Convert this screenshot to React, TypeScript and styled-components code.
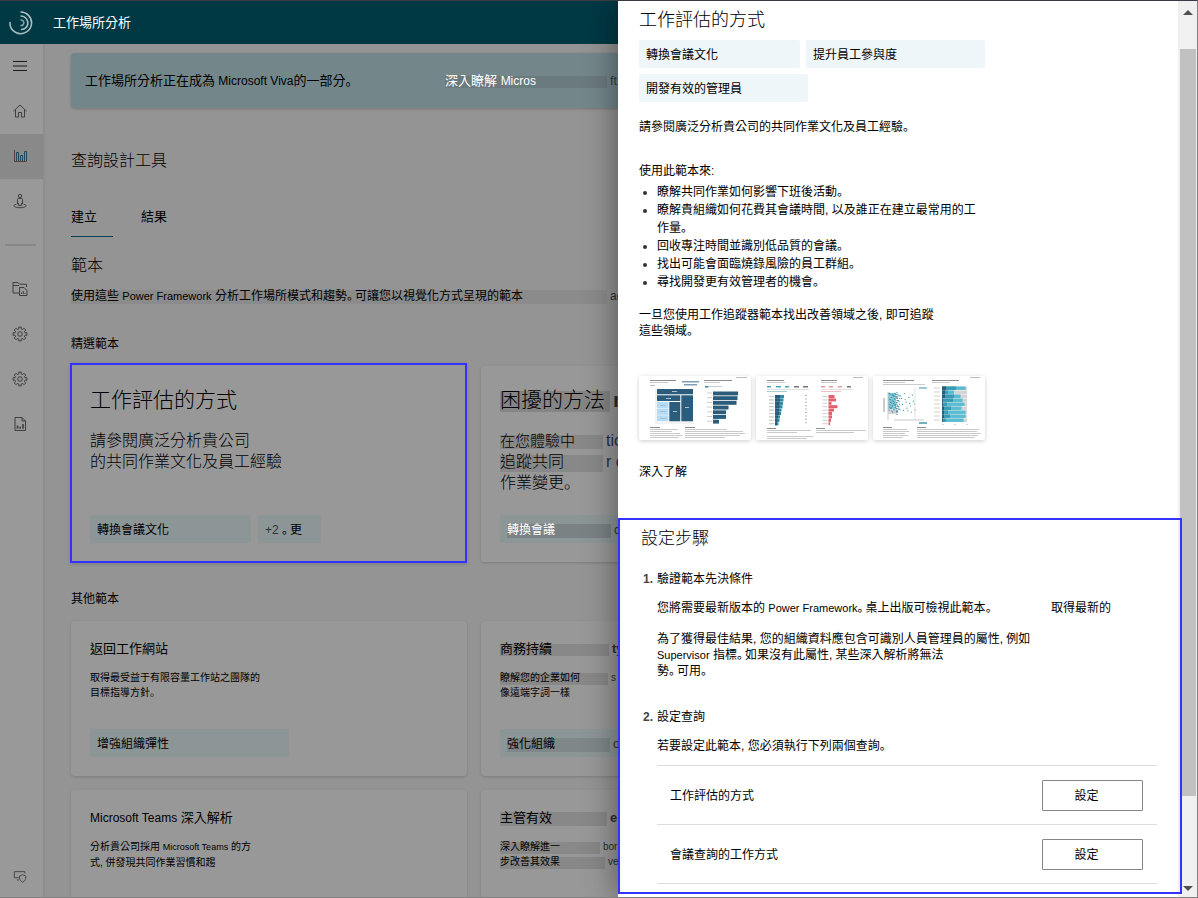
import React from "react";
import styled, { createGlobalStyle } from "styled-components";

const GlobalStyle = createGlobalStyle`
  *, *::before, *::after { box-sizing: border-box; }
  body {
    margin: 0;
    color: #000;
    font: 12px/16px "Liberation Sans", "Noto Sans CJK TC", sans-serif;
  }
  h1, h2, h3, p, ul, ol { margin: 0; padding: 0; font-size: inherit; font-weight: 400; }
  ul, ol { list-style: none; }
  a { color: inherit; text-decoration: none; }
  button { font: inherit; color: inherit; cursor: pointer; }
`;

const BLUE = "#3333ff";

/* ---------- frame ---------- */

const Window = styled.div`
  position: relative;
  display: flex;
  flex-direction: column;
  height: 100vh;
  overflow: hidden;
  background: #949494;
  border: solid #808080;
  border-width: 1px 1px 1px 0;
  border-top-color: #3a3a42;
`;

const TopBar = styled.header`
  display: flex;
  flex: none;
  align-items: center;
  gap: 20px;
  height: 43px;
  padding-left: 9px;
  background: #003944;
  color: #fff;
`;

const AppName = styled.h1`
  font-size: 13px;
  line-height: 20px;
`;

const Body = styled.div`
  display: flex;
  flex: 1;
  min-height: 0;
`;

const SideNav = styled.nav`
  display: flex;
  flex: none;
  flex-direction: column;
  width: 43px;
  background: #999;
  box-shadow: 1px 0 3px rgba(0, 0, 0, 0.08);
`;

const NavButton = styled.button<{ $active?: boolean; $last?: boolean }>`
  display: flex;
  align-items: center;
  justify-content: center;
  height: ${(p) => (p.$last ? 40 : 45)}px;
  margin: ${(p) => (p.$last ? "auto 0 0" : "0")};
  padding: 0 3px 2px 0;
  border: 0;
  background: ${(p) => (p.$active ? "#898989" : "transparent")};
  color: #3f3f3f;
`;

const NavRule = styled.hr`
  width: 31px;
  height: 2px;
  margin: 20px auto 21px 5px;
  border: 0;
  background: #878787;
`;

const Main = styled.main`
  flex: 1;
  min-width: 0;
  padding: 9px 28px 0;
  overflow: hidden;
`;

/* ---------- page content ---------- */

const Latin = styled.span<{ $size?: number; $color?: string }>`
  font-size: ${(p) => p.$size ?? 11}px;
  color: ${(p) => p.$color ?? "inherit"};
`;

/* Full stop set low and to the left, on half an em. */
const StopMark = styled.span`
  margin-right: 2px;
  font-family: "Noto Sans CJK JP", sans-serif;
  font-feature-settings: "halt";
  line-height: 0;
`;
const Stop = () => <StopMark lang="ja">。</StopMark>;

const Banner = styled.section`
  display: flex;
  align-items: center;
  height: 55px;
  padding: 1px 14px 0;
  border-radius: 4px;
  background: #73878b;
  box-shadow: 0 1px 3px rgba(0, 0, 0, 0.2);
  font-size: 13px;
  line-height: 20px;
  white-space: nowrap;
`;

const BannerText = styled.p`
  width: 360px;
`;

const Patch = styled.span<{ $width: number; $tone?: string; $height?: number; $drop?: number }>`
  display: inline-block;
  width: ${(p) => p.$width}px;
  background: linear-gradient(${(p) => p.$tone ?? "#888"} 0 0) no-repeat
    0 calc(50% + ${(p) => p.$drop ?? 1}px) / 100% ${(p) => p.$height ?? 14}px;
  white-space: nowrap;
`;

const Rest = styled.span<{ $bold?: boolean; $color?: string }>`
  margin-left: 3px;
  color: ${(p) => p.$color ?? "#2e2e2e"};
  font-weight: ${(p) => (p.$bold ? 700 : 400)};
`;

const BannerLink = styled.a`
  color: #fff;
`;

const PageTitle = styled.h2`
  margin-top: 43px;
  font-size: 16px;
  font-weight: 300;
  line-height: 20px;
`;

const Tabs = styled.div`
  display: flex;
  gap: 28px;
  margin-top: 36px;
`;

const Tab = styled.button<{ $active?: boolean }>`
  width: 42px;
  padding: 0 0 9px;
  border: 0;
  border-bottom: 1px solid ${(p) => (p.$active ? "#003f4c" : "transparent")};
  background: none;
  font-size: 13px;
  line-height: 20px;
  text-align: left;
`;

const SectionTitle = styled.h2`
  margin-top: 19px;
  font-size: 16px;
  font-weight: 300;
  line-height: 20px;
`;

const Lead = styled.p`
  margin-top: 12px;
  white-space: nowrap;
`;

const GroupTitle = styled.h3<{ $top: number }>`
  margin: ${(p) => p.$top}px 0 14px;
`;

const Grid = styled.div`
  display: grid;
  grid-template-columns: repeat(2, minmax(0, 396px));
  gap: 14px;
`;

const Card = styled.article<{ $large?: boolean }>`
  display: flex;
  flex-direction: column;
  min-height: ${(p) => (p.$large ? 196 : 155)}px;
  padding: ${(p) => (p.$large ? 22 : 18)}px 19px 19px;
  border-radius: 4px;
  background: #989898;
  box-shadow: 0 1px 3px rgba(0, 0, 0, 0.16);
  white-space: nowrap;
`;

const SelectedCard = styled(Card)`
  margin: -3px 0 -1px -1px;
  padding: 23px 18px 18px;
  border: 2px solid ${BLUE};
  border-radius: 0;
`;

const CardTitle = styled.h3<{ $large?: boolean }>`
  font-size: ${(p) => (p.$large ? 21 : 13)}px;
  line-height: ${(p) => (p.$large ? 24 : 20)}px;
  font-weight: ${(p) => (p.$large ? 300 : 400)};
`;

const CardText = styled.p<{ $large?: boolean }>`
  margin-top: ${(p) => (p.$large ? 18 : 11)}px;
  font-size: ${(p) => (p.$large ? 16 : 10)}px;
  font-weight: ${(p) => (p.$large ? 300 : 400)};
  line-height: ${(p) => (p.$large ? 21 : 15)}px;
`;

const TagRow = styled.div<{ $bottom?: boolean }>`
  display: flex;
  flex-wrap: wrap;
  gap: ${(p) => (p.$bottom ? 7 : 6)}px;
  margin-top: ${(p) => (p.$bottom ? "auto" : "8px")};
`;

const Tag = styled.span<{ $width: number; $light?: boolean }>`
  width: ${(p) => p.$width}px;
  padding: 7px 7px 5px;
  border-radius: 2px;
  background: ${(p) => (p.$light ? "#eef6f9" : "#8d9697")};
  white-space: nowrap;
`;

/* ---------- side panel ---------- */

const Panel = styled.aside`
  position: absolute;
  top: 0;
  right: 0;
  bottom: 0;
  display: flex;
  width: 579px;
  max-width: 100%;
  background: #fff;
  box-shadow: -2px 0 30px rgba(0, 0, 0, 0.42);
`;

const PanelContent = styled.div`
  flex: 1;
  min-width: 0;
  padding-top: 7px;
`;

const PanelTop = styled.div`
  padding-left: 21px;
`;

const PanelTitle = styled.h2`
  font-size: 18px;
  line-height: 24px;
  font-weight: 300;
`;

const PanelTags = styled(TagRow)`
  max-width: 352px;
`;

const Para = styled.p<{ $top: number }>`
  margin-top: ${(p) => p.$top}px;
`;

const Bullets = styled.ul`
  margin-top: 4px;
  padding-left: 18px;
  line-height: 18px;
  list-style: disc;

  li::marker { color: #333; }
`;

const Thumbs = styled.div`
  display: flex;
  gap: 5px;
  margin-top: 37px;
`;

const Thumb = styled.figure`
  width: 112px;
  height: 64px;
  margin: 0;
  border-radius: 2px;
  background: #fff;
  box-shadow: 0 1px 4px rgba(0, 0, 0, 0.2);

  svg { display: block; }
`;

const MoreLink = styled.a`
  display: block;
  width: max-content;
  margin-top: 24px;
`;

const Setup = styled.section`
  position: relative;
  z-index: 1;
  margin: 38px -4px 0 0;
  padding: 7px 23px 8px 21px;
  border: 2px solid ${BLUE};
`;

const SetupTitle = styled.h2`
  margin-bottom: 20px;
  font-size: 17px;
  font-weight: 300;
  line-height: 24px;
`;

const Step = styled.li`
  display: grid;
  grid-template-columns: 14px minmax(0, 1fr);
  padding-left: 2px;

  & + & { margin-top: 30px; }
`;

const StepNumber = styled.span`
  color: #444;
  font-weight: 700;
`;

const LinkLine = styled.div`
  display: flex;
  justify-content: space-between;
  margin-top: 13px;
  padding-right: 46px;
`;

const Queries = styled.ul`
  margin-top: 11px;
  border-top: 1px solid #dcdcdc;
`;

const Query = styled.li`
  display: flex;
  align-items: center;
  justify-content: space-between;
  height: 59px;
  padding: 0 14px 0 13px;
  border-bottom: 1px solid #dcdcdc;
`;

const QueryName = styled.span`
  padding-top: 2px;
`;

const SetButton = styled.button`
  width: 101px;
  height: 31px;
  padding: 2px 12px 0 0;
  border: 1px solid #868686;
  border-radius: 1px;
  background: #fff;
`;

const ScrollRail = styled.div`
  display: flex;
  flex: none;
  flex-direction: column;
  align-items: center;
  width: 19px;
  background: #f0f0f0;
`;

const ScrollArrow = styled.button<{ $down?: boolean }>`
  display: flex;
  align-items: center;
  justify-content: center;
  width: 100%;
  height: ${(p) => (p.$down ? 18 : 22)}px;
  padding: 0;
  border: 0;
  background: none;
`;

const ScrollTrack = styled.div`
  flex: 1;
  width: 16px;
  padding-top: 26px;
`;

const ScrollThumb = styled.div`
  height: 90%;
  background: #c1c1c1;
`;

/* ---------- drawings ---------- */

const Logo = () => (
  <svg width="24" height="24" viewBox="0 0 24 24" fill="none" stroke="#a9bcc0" strokeWidth="1.6" strokeLinecap="round">
    <path d="M1 11.5a10.6 10.6 0 0 0 5.4 9.8A11 11 0 0 0 22.6 12 11 11 0 0 0 12 1" />
    <path d="M12 5a7 7 0 0 1 6.8 8 7 7 0 0 1-6.300 5.500" />
    <path d="M12 9a2.800 2.800 0 0 1 0 5.600" stroke="#7d9da4" />
  </svg>
);

const Glyph = ({ children, size = 16 }: { children: React.ReactNode; size?: number }) => (
  <svg width={size} height={size} viewBox="0 0 16 16" fill="none" stroke="currentColor" strokeWidth="1">
    {children}
  </svg>
);

const MenuIcon = () => (
  <Glyph><path d="M1 3.5h14M1 8h14M1 12.5h14" strokeWidth="1.2" stroke="#1c1c1c" /></Glyph>
);
const HomeIcon = () => (
  <Glyph><path d="M1.5 8.2 8 2l6.5 6.2M3.5 7v7h3V9.5h3V14h3V7" /></Glyph>
);
const ChartIcon = () => (
  <Glyph>
    <path d="M2.5 2v11.5h12" stroke="#5c3f38" />
    <path d="M4.500 13V4.500h2V13M8.500 13V7.500h2V13M12.500 13V3.500h2V13" stroke="#23485c" />
  </Glyph>
);
const PersonIcon = () => (
  <Glyph>
    <circle cx="8" cy="3" r="1.7" />
    <path d="M5.5 11V6.5q0-1 1-1h3q1 0 1 1V11M6.5 10v2.5h3V10" />
    <path d="M4.5 11.2c-2 .4-2.500 1-2.500 1.500 0 1.300 3 2 6 2s6-.7 6-2c0-.500-.500-1.100-2.500-1.500" />
  </Glyph>
);
const FolderIcon = () => (
  <Glyph>
    <path d="M7 12H1V1.500h5l1.500 1.700H14.500V6M1 4.500h6" />
    <path d="M7.500 6.500h4.500l3 3V14.500H7.500zM9.500 13v-1.500M11.300 13v-3M13 13v-1" />
  </Glyph>
);
const ReportIcon = () => (
  <Glyph>
    <path d="M3 1.500h7l3.500 3.500v9.500H3zM10 1.500V5h3.500" />
    <path d="M5.500 12.800V9.500M8.200 12.800v-2M11 12.800V8" strokeWidth="1.600" />
  </Glyph>
);
const ShieldIcon = () => (
  <Glyph size={14}>
    <path d="M6.500 10H1.500V3h12v2M4.500 12.500h2.500" />
    <path d="M11 6.500 7.500 8v2.500c0 2 1.500 3.500 3.500 4.500 2-1 3.500-2.500 3.500-4.500V8z" />
  </Glyph>
);

/* Toothed wheel: eight flat teeth round a ring. */
const TEETH = Array.from({ length: 8 }, (_, i) => {
  const at = (deg: number, r: number) => {
    const a = ((i * 45 + deg) * Math.PI) / 180;
    return `${(8 + r * Math.cos(a)).toFixed(2)} ${(8 + r * Math.sin(a)).toFixed(2)}`;
  };
  return `${at(-13, 5.2)}L${at(-11, 7)}L${at(11, 7)}L${at(13, 5.2)}`;
}).join("L");

const GearIcon = () => (
  <Glyph>
    <path d={`M${TEETH}Z`} strokeLinejoin="round" />
    <circle cx="8" cy="8" r="2.300" />
  </Glyph>
);

const Lines = ({ x, y, widths, step = 2 }: { x: number; y: number; widths: number[]; step?: number }) => (
  <g fill="#c9c9c9">
    {widths.map((w, i) => (
      <rect key={i} x={x} y={y + i * step} width={w} height="1" fill={i === 0 ? "#8c8c8c" : undefined} />
    ))}
  </g>
);

const Bars = ({ x, y, pitch, h, widths, fill }: { x: number; y: number; pitch: number; h: number; widths: number[]; fill: string }) => (
  <g fill={fill}>
    {widths.map((w, i) => (
      <React.Fragment key={i}>
        <rect x={x} y={y + i * pitch} width={w} height={h} />
        <rect x={x - 6} y={y + i * pitch + 1} width="5" height="1" fill="#cfcfcf" />
      </React.Fragment>
    ))}
  </g>
);

const TreemapChart = () => (
  <svg width="112" height="64" viewBox="0 0 112 64" role="img" aria-label="圖表">
    <Lines x={11} y={4} widths={[26, 18]} />
    <rect x="43" y="5" width="17" height="1.500" fill="#7d9db8" />
    <rect x="45" y="8" width="13" height="1.500" fill="#7d9db8" />
    <rect x="11" y="9" width="5" height="1" fill="#bbb" />
    <g fill="#2b5c7b">
      <rect x="18" y="13" width="36" height="5.300" />
      <rect x="18" y="19.300" width="23.300" height="5.700" />
      <rect x="42.300" y="19.300" width="11.700" height="26" />
      <rect x="30.300" y="26" width="11" height="19.300" />
    </g>
    <g fill="#b5dbf8">
      <rect x="18" y="26" width="11.500" height="6" />
      <rect x="18" y="32.500" width="11.500" height="6.300" />
      <rect x="18" y="39.300" width="11.500" height="6" />
    </g>
    <g fill="#a9c0ce">
      <rect x="33" y="15" width="5" height="1" />
      <rect x="27" y="22" width="5" height="1" />
      <rect x="46" y="31" width="4" height="1" />
      <rect x="34" y="35" width="4" height="1" />
      <rect x="21" y="29" width="6" height="1" />
      <rect x="21" y="35" width="6" height="1" />
      <rect x="21" y="42" width="6" height="1" />
    </g>
    <path d="M17 13v34h38" stroke="#d5d5d5" strokeWidth=".6" fill="none" />
    <Lines x={65} y={4} widths={[28, 16]} />
    <rect x="66" y="10" width="3.500" height="1.500" fill="#2b8ba8" />
    <rect x="70" y="10" width="13" height="1" fill="#ccc" />
    <rect x="97" y="1" width="11" height="1" fill="#bbb" />
    <Bars x={74} y={15.500} pitch={4.700} h={3.900} widths={[25, 24.500, 23.500, 15.500, 13, 13, 6]} fill="#2b5c7b" />
    <Lines x={11} y={51} widths={[10, 28, 22, 30, 32, 29]} />
    <Lines x={46} y={51} widths={[10, 42, 58, 60, 55, 40]} />
  </svg>
);

const CompareChart = () => (
  <svg width="112" height="64" viewBox="0 0 112 64" role="img" aria-label="圖表">
    <Lines x={11} y={4} widths={[17, 18]} />
    <Lines x={65} y={4} widths={[16, 16]} />
    <rect x="97" y="1" width="10" height="1" fill="#bbb" />
    <g fill="#4ba6ba">
      <rect x="11" y="10" width="4" height="1.500" />
      <rect x="20" y="10" width="5" height="1.500" />
      <rect x="29" y="10" width="4" height="1.500" />
    </g>
    <g fill="#777">
      <rect x="38" y="10" width="5" height="1.500" />
      <rect x="47" y="10" width="5" height="1.500" />
      <rect x="91" y="10" width="4" height="1.500" />
    </g>
    <g fill="#e79aa2">
      <rect x="65" y="10" width="4" height="1.500" />
      <rect x="73" y="10" width="4" height="1.500" />
      <rect x="82" y="10" width="4" height="1.500" />
    </g>
    <rect x="11" y="13" width="42" height=".6" fill="#ccc" />
    <rect x="65" y="13" width="32" height=".6" fill="#ccc" />
    <rect x="11" y="15" width="20" height="1" fill="#a9cdd6" />
    <rect x="65" y="15" width="20" height="1" fill="#ecc0c4" />
    <Bars x={19} y={19} pitch={3.400} h={3.100} widths={[9, 8.500, 8, 7.500, 6.500, 6, 5, 4.500, 3.500]} fill="#2f8da6" />
    <Bars x={19} y={19} pitch={3.400} h={3.100} widths={[5, 5, 4.500, 4.500, 4, 4, 3, 2.500, 2]} fill="#2b5c7b" />
    <path d="M50 19v30" stroke="#b5b5b5" strokeDasharray="1 2.400" strokeWidth="2" />
    <Bars x={72.500} y={19} pitch={3.400} h={3} widths={[6, 7.500, 3, 9, 5.500, 3.500, 3.500, 2.500, 1.500]} fill="#e0606c" />
    <Lines x={11} y={52} widths={[9, 44, 30, 0, 46, 40]} />
    <Lines x={60} y={52} widths={[9, 50, 38]} />
  </svg>
);

const dots = Array.from({ length: 90 }, (_, i) => ({
  x: 16 + ((i * 37) % 90) * (i % 3 === 0 ? 0.3 : 0.12),
  y: 17 + ((i * 53) % 97) * 0.2,
}));
const stacks = [25, 25, 20, 22, 24, 21, 25, 25, 23];

const ScatterChart = () => (
  <svg width="112" height="64" viewBox="0 0 112 64" role="img" aria-label="圖表">
    <Lines x={10} y={4} widths={[31, 22]} />
    <rect x="10" y="8" width="42" height="1" fill="#ccc" />
    <rect x="15" y="33" width="9" height="5" fill="#d8d8d8" />
    <rect x="15" y="17" width="8" height="16" fill="#8ccbd8" />
    <g fill="#3a93aa">
      {dots.map((d, i) => <circle key={i} cx={d.x} cy={d.y} r=".6" />)}
    </g>
    <path d="M24 16v24" stroke="#2b5c7b" strokeWidth=".8" strokeDasharray="1 1" />
    <path d="M42 12v32" stroke="#d0d0d0" strokeWidth=".6" />
    <rect x="46" y="11" width="8" height="2" fill="#9ccbd6" />
    <path d="M15 16v28M21 44h30" stroke="#bbb" strokeWidth=".8" />
    <rect x="10.500" y="22" width="1" height="14" fill="#999" />
    <rect x="46" y="46" width="8" height="2" fill="#6fb3c3" />
    <Lines x={59} y={4} widths={[27, 18]} />
    <rect x="97" y="1" width="10" height="1" fill="#bbb" />
    {stacks.map((w, i) => (
      <g key={i}>
        <rect x="61" y={11.500 + i * 4} width="6" height="1" fill="#cfcfcf" />
        <rect x="69" y={10.500 + i * 4} width="25" height="3.400" fill="#d3d3d3" />
        <rect x="69" y={10.500 + i * 4} width={i === 1 ? 12 : w - 1.500} height="3.400" fill="#58bdd2" />
        <rect x="69" y={10.500 + i * 4} width={[14, 6, 12, 11, 5, 9, 6, 8, 4][i]} height="3.400" fill="#3a9ab2" />
        <rect x="69" y={10.500 + i * 4} width={[4, 3, 3, 1, 1, 2, 2, 2, 1][i]} height="3.400" fill="#2b5c7b" />
      </g>
    ))}
    <path d="M69 48.500h26" stroke="#ccc" strokeWidth=".8" strokeDasharray="2 10" />
    <Lines x={10} y={51} widths={[9, 24, 26, 22, 25, 20]} />
    <Lines x={44} y={51} widths={[9, 62, 60, 64, 61, 58]} />
  </svg>
);

/* ---------- app ---------- */

export default function App() {
  return (
    <Window>
      <GlobalStyle />
      <TopBar>
        <Logo />
        <AppName>工作場所分析</AppName>
      </TopBar>
      <Body>
        <SideNav aria-label="導覽">
          <NavButton aria-label="功能表"><MenuIcon /></NavButton>
          <NavButton aria-label="首頁"><HomeIcon /></NavButton>
          <NavButton aria-label="分析" $active><ChartIcon /></NavButton>
          <NavButton aria-label="人員"><PersonIcon /></NavButton>
          <NavRule />
          <NavButton aria-label="資料夾"><FolderIcon /></NavButton>
          <NavButton aria-label="設定"><GearIcon /></NavButton>
          <NavButton aria-label="系統設定"><GearIcon /></NavButton>
          <NavButton aria-label="報告"><ReportIcon /></NavButton>
          <NavButton aria-label="隱私權" $last><ShieldIcon /></NavButton>
        </SideNav>
        <Main>
          <Banner>
            <BannerText>
              工作場所分析正在成為<Latin $size={12}> Microsoft Viva</Latin>的一部分<Stop />
            </BannerText>
            <BannerLink href="#viva">
              <Patch $width={162} $tone="#6b7a7e" $height={12}>深入瞭解 <Latin $size={12}>Micros</Latin></Patch>
              <Rest $color="#2f4347">ft</Rest>
            </BannerLink>
          </Banner>
          <PageTitle>查詢設計工具</PageTitle>
          <Tabs role="tablist">
            <Tab role="tab" aria-selected="true" $active>建立</Tab>
            <Tab role="tab" aria-selected="false">結果</Tab>
          </Tabs>
          <SectionTitle>範本</SectionTitle>
          <Lead>
            <Patch $width={536} $tone="#8b8b8b">
              使用這些 <Latin>Power Framework</Latin> 分析工作場所模式和趨勢<Stop />可讓您以視覺化方式呈現的範本
            </Patch>
            <Rest>ad</Rest>
          </Lead>
          <GroupTitle $top={32}>精選範本</GroupTitle>
          <Grid>
            <SelectedCard $large>
              <CardTitle $large>工作評估的方式</CardTitle>
              <CardText $large>請參閱廣泛分析貴公司<br />的共同作業文化及員工經驗</CardText>
              <TagRow $bottom>
                <Tag $width={161}>轉換會議文化</Tag>
                <Tag $width={63}><Latin $size={12} $color="#333">+2</Latin> <Stop />更</Tag>
              </TagRow>
            </SelectedCard>
            <Card $large>
              <CardTitle $large><Patch $width={110} $height={23} $drop={2} $tone="#858585">困擾的方法</Patch><Rest $bold>m</Rest></CardTitle>
              <CardText $large>
                <Patch $width={103}><Latin $size={15}>在您體驗中</Latin></Patch><Rest $color="#26324a">tion</Rest><br />
                <Patch $width={103} $height={18} $drop={2}>追蹤共同</Patch><Rest $color="#26324a">r c</Rest><br />
                作業變更<Stop />
              </CardText>
              <TagRow $bottom>
                <Tag $width={170}><Patch $width={104} $tone="#7a8283"><Latin $size={12} $color="#fff">轉換會議</Latin></Patch><Rest>c</Rest></Tag>
              </TagRow>
            </Card>
          </Grid>
          <GroupTitle $top={29}>其他範本</GroupTitle>
          <Grid>
            <Card>
              <CardTitle>返回工作網站</CardTitle>
              <CardText>取得最受益于有限容量工作站之團隊的<br />目標指導方針<Stop /></CardText>
              <TagRow $bottom><Tag $width={199}>增強組織彈性</Tag></TagRow>
            </Card>
            <Card>
              <CardTitle><Patch $width={109} $height={12}>商務持續</Patch><Rest $bold>ty</Rest></CardTitle>
              <CardText>
                <Patch $width={108} $height={12}>瞭解您的企業如何</Patch><Rest>s</Rest><br />
                像遠端字詞一樣
              </CardText>
              <TagRow $bottom><Tag $width={170}><Patch $width={103} $tone="#7f8788">強化組織</Patch><Rest>o</Rest></Tag></TagRow>
            </Card>
            <Card>
              <CardTitle><Latin $size={12}>Microsoft Teams</Latin> 深入解析</CardTitle>
              <CardText>分析貴公司採用 <Latin $size={9}>Microsoft Teams</Latin> 的方<br />式, 併發現共同作業習慣和趨</CardText>
            </Card>
            <Card>
              <CardTitle><Patch $width={107}>主管有效</Patch><Rest $bold>e</Rest></CardTitle>
              <CardText>
                <Patch $width={100} $height={12}>深入瞭解進一</Patch><Rest>bor</Rest><br />
                <Patch $width={105} $height={12}>步改善其效果</Patch><Rest>ve</Rest>
              </CardText>
            </Card>
          </Grid>
        </Main>
      </Body>

      <Panel aria-label="範本詳細資料">
        <PanelContent>
          <PanelTop>
            <PanelTitle>工作評估的方式</PanelTitle>
            <PanelTags>
              <Tag $light $width={161}>轉換會議文化</Tag>
              <Tag $light $width={179}>提升員工參與度</Tag>
              <Tag $light $width={169}>開發有效的管理員</Tag>
            </PanelTags>
            <Para $top={17}>請參閱廣泛分析貴公司的共同作業文化及員工經驗<Stop /></Para>
            <Para $top={28}>使用此範本來:</Para>
            <Bullets>
              <li>瞭解共同作業如何影響下班後活動<Stop /></li>
              <li>瞭解貴組織如何花費其會議時間, 以及誰正在建立最常用的工<br />作量<Stop /></li>
              <li>回收專注時間並識別低品質的會議<Stop /></li>
              <li>找出可能會面臨燒錄風險的員工群組<Stop /></li>
              <li>尋找開發更有效管理者的機會<Stop /></li>
            </Bullets>
            <Para $top={16}>一旦您使用工作追蹤器範本找出改善領域之後, 即可追蹤<br />這些領域<Stop /></Para>
            <Thumbs>
              <Thumb><TreemapChart /></Thumb>
              <Thumb><CompareChart /></Thumb>
              <Thumb><ScatterChart /></Thumb>
            </Thumbs>
            <MoreLink href="#more">深入了解</MoreLink>
          </PanelTop>
          <Setup>
            <SetupTitle>設定步驟</SetupTitle>
            <ol>
              <Step>
                <StepNumber>1.</StepNumber>
                <div>
                  <h3>驗證範本先決條件</h3>
                  <LinkLine>
                    <p>您將需要最新版本的 <Latin>Power Framework</Latin><Stop />桌上出版可檢視此範本<Stop /></p>
                    <a href="#latest">取得最新的</a>
                  </LinkLine>
                  <Para $top={15}>
                    為了獲得最佳結果, 您的組織資料應包含可識別人員管理員的屬性, 例如<br />
                    <Latin>Supervisor</Latin> 指標<Stop />如果沒有此屬性, 某些深入解析將無法<br />
                    勢<Stop />可用<Stop />
                  </Para>
                </div>
              </Step>
              <Step>
                <StepNumber>2.</StepNumber>
                <div>
                  <h3>設定查詢</h3>
                  <Para $top={13}>若要設定此範本, 您必須執行下列兩個查詢<Stop /></Para>
                  <Queries>
                    <Query><QueryName>工作評估的方式</QueryName><SetButton>設定</SetButton></Query>
                    <Query><QueryName>會議查詢的工作方式</QueryName><SetButton>設定</SetButton></Query>
                  </Queries>
                </div>
              </Step>
            </ol>
          </Setup>
        </PanelContent>
        <ScrollRail>
          <ScrollArrow aria-label="向上捲動">
            <svg width="10" height="5" viewBox="0 0 10 5"><path d="M0 5 5 0l5 5z" fill="#505050" /></svg>
          </ScrollArrow>
          <ScrollTrack><ScrollThumb /></ScrollTrack>
          <ScrollArrow aria-label="向下捲動" $down>
            <svg width="10" height="5" viewBox="0 0 10 5"><path d="M0 0h10L5 5z" fill="#505050" /></svg>
          </ScrollArrow>
        </ScrollRail>
      </Panel>
    </Window>
  );
}
